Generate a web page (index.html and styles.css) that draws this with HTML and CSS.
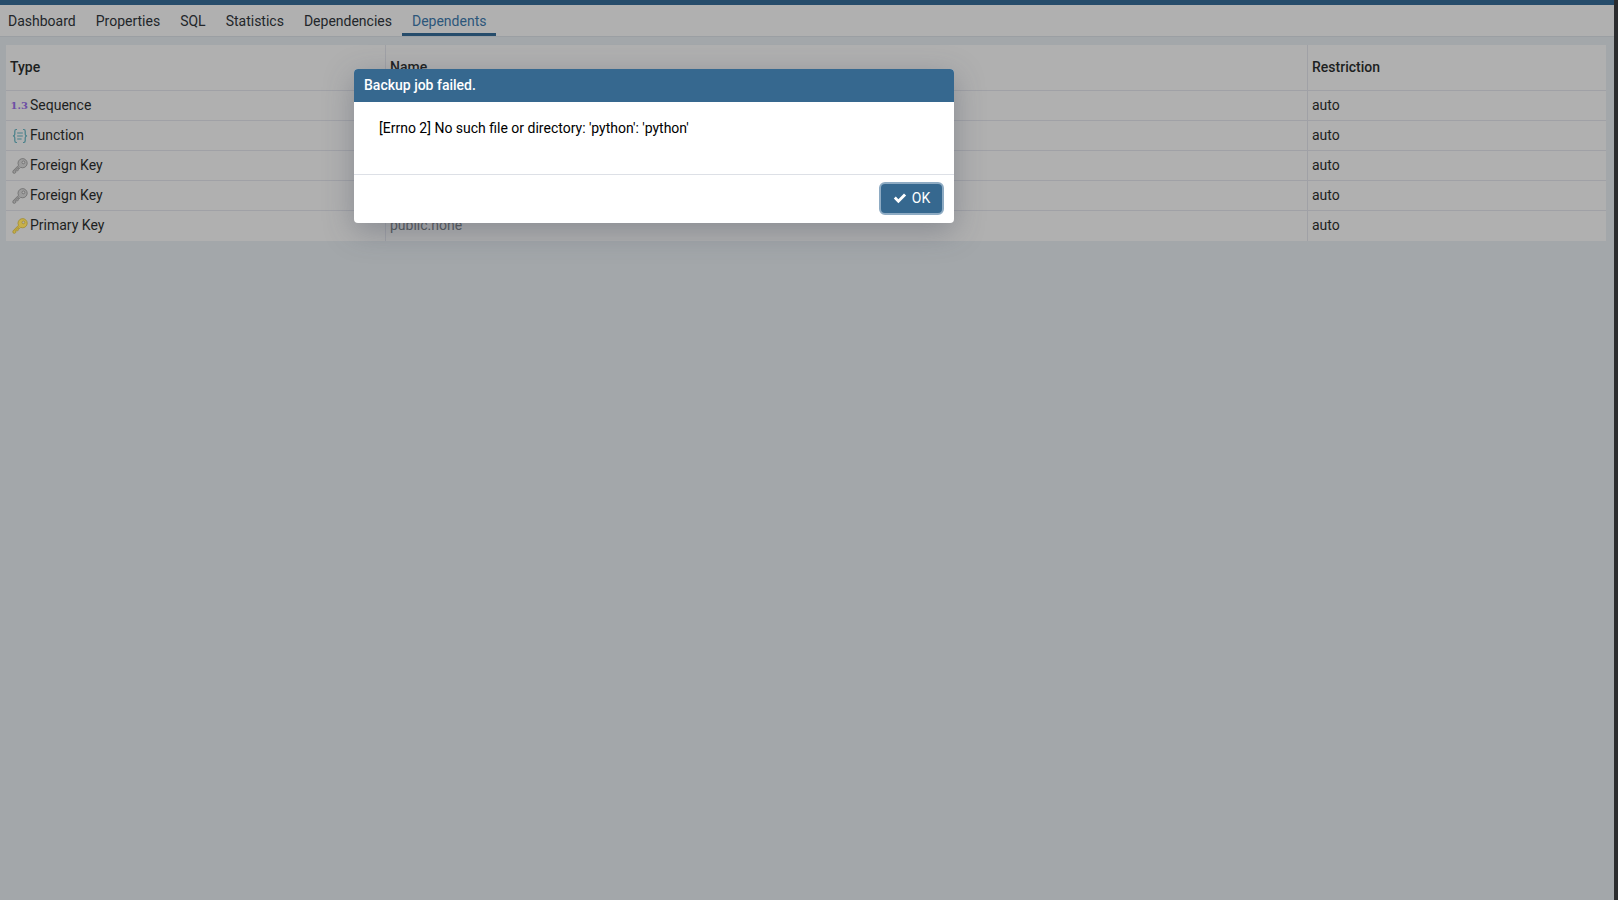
FILE: index.html
```html
<!DOCTYPE html>
<html>
<head>
<meta charset="utf-8">
<title>Dependents</title>
<link rel="stylesheet" href="styles.css">
</head>
<body>

<!-- Barra superior -->
<div class="top_bar"></div>

<!-- Pestanas -->
<ul class="tabs">
  <li>Dashboard</li>
  <li>Properties</li>
  <li>SQL</li>
  <li>Statistics</li>
  <li>Dependencies</li>
  <li class="active">Dependents</li>
</ul>

<!-- Tabla -->
<div class="contenido">
  <table class="tabla">
    <tr>
      <th class="col_tipo">Type</th>
      <th class="col_nombre">Name</th>
      <th>Restriction</th>
    </tr>
    <tr>
      <td><span class="celda_tipo"><span class="icono_seq">1.3</span>Sequence</span></td>
      <td></td>
      <td>auto</td>
    </tr>
    <tr>
      <td><span class="celda_tipo">
        <svg class="icono" viewBox="0 0 16 16" fill="none" stroke="#47808a" stroke-width="1.2">
          <path d="M5 1.5H4.2C3.1 1.5 2.8 2.3 2.8 3.2V6.3C2.8 7.2 2.4 7.8 1 8C2.4 8.2 2.8 8.8 2.8 9.7V12.8C2.8 13.7 3.1 14.5 4.2 14.5H5"/>
          <path d="M11 1.5H11.8C12.9 1.5 13.2 2.3 13.2 3.2V6.3C13.2 7.2 13.6 7.8 15 8C13.6 8.2 13.2 8.8 13.2 9.7V12.8C13.2 13.7 12.9 14.5 11.8 14.5H11"/>
          <path d="M5.2 5H10.8M5.2 8H10.8M5.2 11H9.6"/>
        </svg>Function</span></td>
      <td></td>
      <td>auto</td>
    </tr>
    <tr>
      <td><span class="celda_tipo">
        <svg class="icono" viewBox="0 0 16 16"><use href="#llave" fill="#9c9c9c" stroke="#6c6c6c"/></svg>Foreign Key</span></td>
      <td></td>
      <td>auto</td>
    </tr>
    <tr>
      <td><span class="celda_tipo">
        <svg class="icono" viewBox="0 0 16 16"><use href="#llave" fill="#9c9c9c" stroke="#6c6c6c"/></svg>Foreign Key</span></td>
      <td></td>
      <td>auto</td>
    </tr>
    <tr>
      <td><span class="celda_tipo">
        <svg class="icono" viewBox="0 0 16 16"><use href="#llave" fill="#c8b04a" stroke="#a08c30"/></svg>Primary Key</span></td>
      <td class="nombre">public.none</td>
      <td>auto</td>
    </tr>
  </table>
</div>

<div class="barra_lateral"></div>

<!-- Dialogo -->
<div class="dialogo">
  <div class="dialogo_titulo">Backup job failed.</div>
  <div class="dialogo_cuerpo">[Errno 2] No such file or directory: 'python': 'python'</div>
  <div class="dialogo_pie">
    <button class="boton_ok">
      <svg class="check" viewBox="0 0 14 14"><path d="M0.8 7.6L2.8 5.6L5.4 8.2L11 2.6L13.1 4.6L5.4 12.2Z" fill="#fff"/></svg>OK
    </button>
  </div>
</div>

<svg class="defs_ocultos">
  <defs>
    <g id="llave" stroke-width="0.8">
      <path d="M0.9 13L6.5 7.3A4.6 4.6 0 1 1 8.7 9.4L7.6 10.5L6.6 10.2L6.1 10.9L6.4 12L5.3 13.1L4.2 12.8L3.6 13.5L3.8 14.4L2.8 15.3L1 14.9Z"/>
      <circle cx="11.4" cy="4.4" r="1.4" fill="#b0b0b0"/>
      <path d="M2.4 13.2L7.2 8.4" fill="none"/>
    </g>
  </defs>
</svg>

</body>
</html>
```

FILE: styles.css
```css
/* General */
html, body
{
  margin: 0;
  height: 100%;
}

body
{
  background-color: #a3a7aa;
  font-family: Roboto, "Liberation Sans", sans-serif;
  font-size: 14px;
  color: #1d1f21;
  overflow: hidden;
}

/* Barra superior */
.top_bar
{
  height: 5px;
  margin-right: 4px;
  background-color: #264c6b;
}

/* Pestanas */
.tabs
{
  list-style-type: none;
  display: flex;
  margin: 0 4px 0 0;
  padding: 0;
  height: 31px;
  background-color: #b0b0b0;
  border-bottom: 1px solid #9b9fa3;
}

.tabs li
{
  padding: 8px 10px 0;
  height: 23px;
  line-height: 16px;
  color: #22262a;
}

.tabs li:first-child
{
  padding-left: 8px;
}

.tabs li.active
{
  color: #2c567a;
  border-bottom: 3px solid #264c6b;
  height: 20px;
}

/* Tabla */
.contenido
{
  padding: 8px 12px 0 6px;
}

.tabla
{
  width: 1600px;
  border-collapse: collapse;
  table-layout: fixed;
  background-color: #b0b0b0;
}

.tabla th, .tabla td
{
  padding: 0 4px 2px;
  text-align: left;
  border-bottom: 1px solid #a0a1a6;
  border-left: 1px solid #a0a1a6;
}

.tabla tr:last-child td
{
  border-bottom: none;
  height: 28px;
}

.tabla th:first-child, .tabla td:first-child
{
  border-left: none;
}

.tabla th
{
  height: 43px;
  font-weight: 500;
}

.tabla td
{
  height: 27px;
}

.col_tipo
{
  width: 371px;
}

.col_nombre
{
  width: 913px;
}

.nombre
{
  color: #55595c;
}

.celda_tipo
{
  display: flex;
  align-items: center;
}

.icono
{
  width: 16px;
  height: 16px;
  margin: 2px 2px 0 2px;
  flex: none;
}

.icono_seq
{
  width: 20px;
  font-family: "DejaVu Serif", serif;
  font-size: 10px;
  font-weight: 700;
  text-align: right;
  padding-right: 2px;
  box-sizing: border-box;
  color: #6d4fa5;
  margin-top: 2px;
}

.barra_lateral
{
  position: absolute;
  top: 0;
  right: 0;
  bottom: 0;
  width: 4px;
  background-color: #2b2c2e;
}

/* Dialogo */
.dialogo
{
  position: absolute;
  top: 69px;
  left: 354px;
  width: 600px;
  height: 154px;
  display: flex;
  flex-direction: column;
  background-color: #fff;
  border-radius: 4px;
  overflow: hidden;
  box-shadow: 0 8px 30px rgba(60, 70, 90, 0.35);
}

.dialogo_titulo
{
  height: 33px;
  line-height: 32px;
  padding-left: 10px;
  background-color: #36688f;
  color: #fff;
  font-weight: 500;
}

.dialogo_cuerpo
{
  height: 72px;
  padding: 18px 25px 0;
  box-sizing: border-box;
  line-height: 16px;
  color: #000;
}

.dialogo_pie
{
  flex: 1;
  display: flex;
  justify-content: flex-end;
  align-items: flex-start;
  padding: 7px 10px 0 0;
  border-top: 1px solid #dde0e6;
}

.boton_ok
{
  display: flex;
  align-items: center;
  justify-content: center;
  width: 65px;
  height: 33px;
  padding: 0 0 2px;
  background-color: #36688f;
  border: 2px solid #8eabc3;
  border-radius: 6px;
  color: #fff;
  font-family: inherit;
  font-size: 14px;
}

.check
{
  width: 14px;
  height: 14px;
  margin-right: 5px;
}

.defs_ocultos
{
  position: absolute;
  width: 0;
  height: 0;
}
```
